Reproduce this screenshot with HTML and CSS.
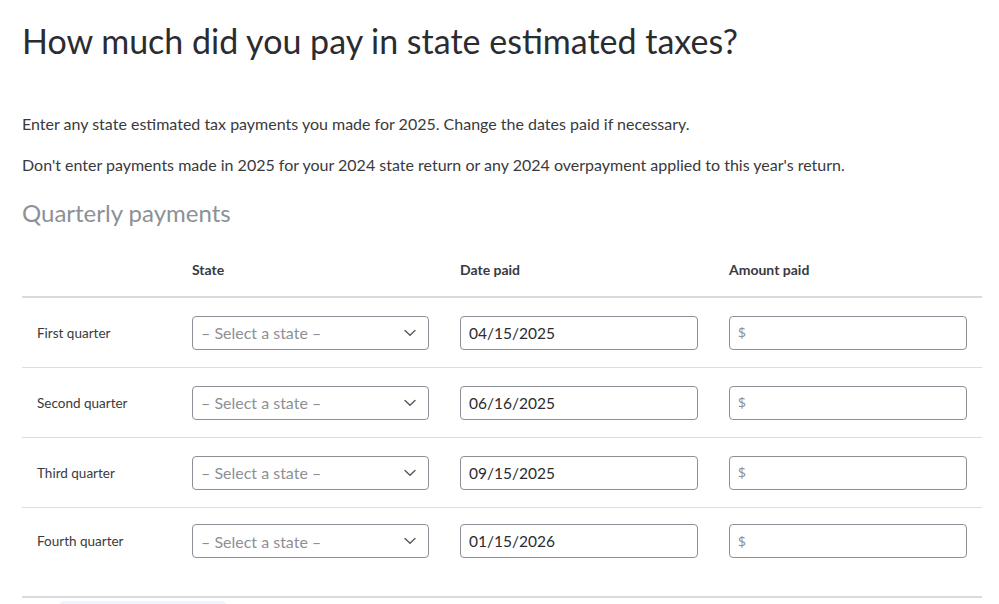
FILE: index.html
```html
<!DOCTYPE html>
<html lang="en">
<head>
<meta charset="utf-8">
<title>State estimated taxes</title>
<link rel="stylesheet" href="styles.css">
</head>
<body>
<main class="page">
  <h1 class="title">How much did you pay in state estimated taxes?</h1>
  <p class="intro intro-first">Enter any state estimated tax payments you made for 2025. Change the dates paid if necessary.</p>
  <p class="intro intro-second">Don't enter payments made in 2025 for your 2024 state return or any 2024 overpayment applied to this year's return.</p>
  <h2 class="section-title">Quarterly payments</h2>

  <div class="table">
    <div class="row head">
      <div class="cell label"></div>
      <div class="cell col-head">State</div>
      <div class="cell col-head">Date paid</div>
      <div class="cell col-head">Amount paid</div>
    </div>

    <div class="row">
      <div class="cell label">First quarter</div>
      <div class="cell"><div class="select"><span class="placeholder">– Select a state –</span><svg class="chev" viewBox="0 0 12 8" width="12" height="8"><path d="M1 1.5 L6 6.2 L11 1.5" fill="none" stroke="#55575c" stroke-width="1.4" stroke-linecap="round" stroke-linejoin="round"/></svg></div></div>
      <div class="cell"><div class="input"><span class="value">04/15/2025</span></div></div>
      <div class="cell"><div class="input"><span class="dollar">$</span></div></div>
    </div>

    <div class="row">
      <div class="cell label">Second quarter</div>
      <div class="cell"><div class="select"><span class="placeholder">– Select a state –</span><svg class="chev" viewBox="0 0 12 8" width="12" height="8"><path d="M1 1.5 L6 6.2 L11 1.5" fill="none" stroke="#55575c" stroke-width="1.4" stroke-linecap="round" stroke-linejoin="round"/></svg></div></div>
      <div class="cell"><div class="input"><span class="value">06/16/2025</span></div></div>
      <div class="cell"><div class="input"><span class="dollar">$</span></div></div>
    </div>

    <div class="row">
      <div class="cell label">Third quarter</div>
      <div class="cell"><div class="select"><span class="placeholder">– Select a state –</span><svg class="chev" viewBox="0 0 12 8" width="12" height="8"><path d="M1 1.5 L6 6.2 L11 1.5" fill="none" stroke="#55575c" stroke-width="1.4" stroke-linecap="round" stroke-linejoin="round"/></svg></div></div>
      <div class="cell"><div class="input"><span class="value">09/15/2025</span></div></div>
      <div class="cell"><div class="input"><span class="dollar">$</span></div></div>
    </div>

    <div class="row last">
      <div class="cell label">Fourth quarter</div>
      <div class="cell"><div class="select"><span class="placeholder">– Select a state –</span><svg class="chev" viewBox="0 0 12 8" width="12" height="8"><path d="M1 1.5 L6 6.2 L11 1.5" fill="none" stroke="#55575c" stroke-width="1.4" stroke-linecap="round" stroke-linejoin="round"/></svg></div></div>
      <div class="cell"><div class="input"><span class="value">01/15/2026</span></div></div>
      <div class="cell"><div class="input"><span class="dollar">$</span></div></div>
    </div>
  </div>
  <div class="below"><div class="ghost-btn"></div></div>
</main>
</body>
</html>
```

FILE: styles.css
```css
html, body {
  margin: 0;
  padding: 0;
  background: #ffffff;
}
body {
  font-family: "Lato", "Open Sans", "DejaVu Sans", sans-serif;
  color: #393a3d;
}
.page {
  padding: 21px 17px 0 22px;
  overflow: hidden;
  height: 604px;
  box-sizing: border-box;
}
.title {
  margin: 0;
  font-size: 34px;
  line-height: 40px;
  font-weight: 400;
  color: #2b2c30;
}
.intro {
  margin: 0;
  font-size: 16px;
  line-height: 20px;
  color: #393a3d;
}
.intro-first { margin-top: 53px; }
.intro-second { margin-top: 21px; }
.section-title {
  margin: 24px 0 0;
  font-size: 24px;
  line-height: 28px;
  font-weight: 400;
  color: #8d9096;
}
.table {
  margin-top: 34px;
  width: 960px;
}
.row {
  display: grid;
  grid-template-columns: 139px 237px 238px 238px;
  column-gap: 31px;
  align-items: center;
  height: 69px;
  border-bottom: 1px solid #dcdee1;
}
.row.head {
  height: 35px;
  align-items: start;
  border-bottom: 2px solid #d8dadd;
}
.row.last {
  box-sizing: border-box;
  height: 90px;
  padding-bottom: 22px;
  border-bottom: 2px solid #d8dadd;
}
.col-head {
  font-size: 14px;
  line-height: 18px;
  font-weight: 700;
  color: #393a3d;
}
.label {
  padding-left: 15px;
  font-size: 13.5px;
  line-height: 18px;
  color: #393a3d;
}
.select, .input {
  height: 34px;
  box-sizing: border-box;
  border: 1px solid #8d9096;
  border-radius: 4px;
  display: flex;
  align-items: center;
  padding: 0 8px;
  font-size: 15.5px;
  background: #fff;
}
.select {
  justify-content: space-between;
  padding-right: 12px;
  font-size: 16px;
}
.placeholder { color: #8d9096; }
.value { color: #2b2c30; }
.dollar { color: #8d9096; font-size: 14px; font-family: "Open Sans", "Lato", sans-serif; }
.chev { display: block; }
.below {
  padding-left: 38px;
  margin-top: 3px;
}
.ghost-btn {
  width: 166px;
  height: 30px;
  background: #eef4fb;
  border-radius: 4px;
}
```
